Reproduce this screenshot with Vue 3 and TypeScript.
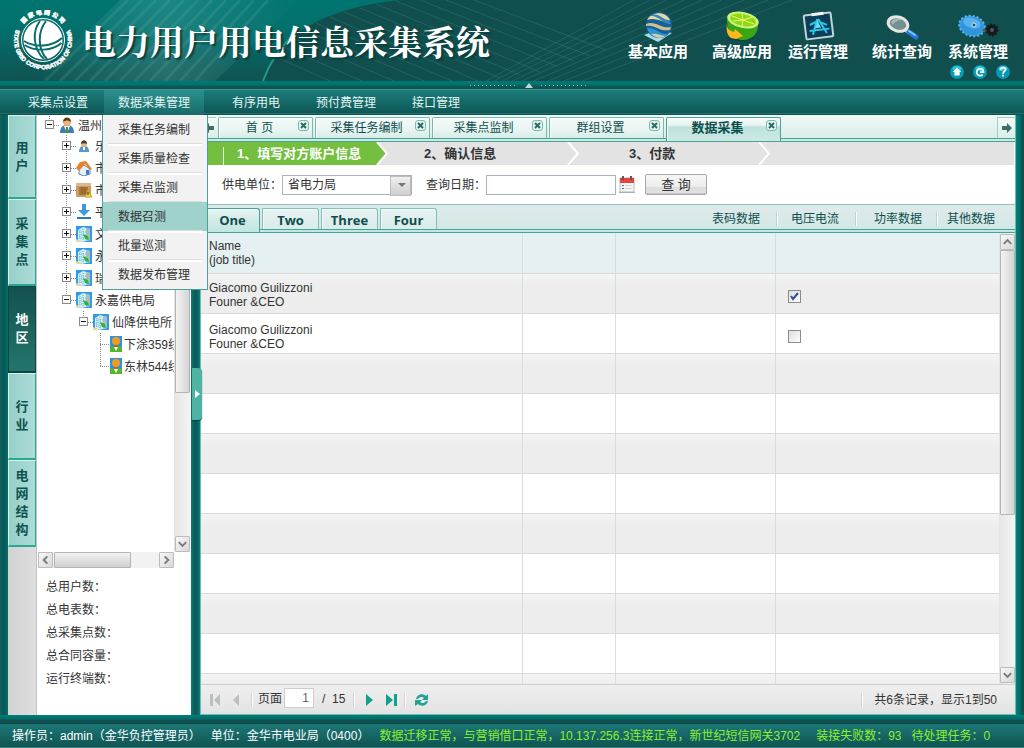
<script setup lang="ts">
import { ref } from 'vue'

type IconName = 'globe' | 'lime' | 'board' | 'lens' | 'gear'
type TreeIcon = 'user' | 'worker' | 'home' | 'box' | 'down' | 'tower' | 'line'

interface TreeRow {
  depth: number
  icon: TreeIcon
  label: string
  node: 'open' | 'closed' | 'leaf'
}

const apps: { name: string; icon: IconName }[] = [
  { name: '基本应用', icon: 'globe' },
  { name: '高级应用', icon: 'lime' },
  { name: '运行管理', icon: 'board' },
  { name: '统计查询', icon: 'lens' },
  { name: '系统管理', icon: 'gear' },
]

const navItems = ['采集点设置', '数据采集管理', '有序用电', '预付费管理', '接口管理']
const activeNav = ref(1)
const menuItems = ['采集任务编制', '采集质量检查', '采集点监测', '数据召测', '批量巡测', '数据发布管理']
const activeMenu = ref(3)

const sideTabs = ['用户', '采集点', '地区', '行业', '电网结构']
const activeSide = ref(2)

const tree: TreeRow[] = [
  { depth: 0, icon: 'user', label: '温州', node: 'open' },
  { depth: 1, icon: 'worker', label: '乐', node: 'closed' },
  { depth: 1, icon: 'home', label: '市', node: 'closed' },
  { depth: 1, icon: 'box', label: '市', node: 'closed' },
  { depth: 1, icon: 'down', label: '平', node: 'closed' },
  { depth: 1, icon: 'tower', label: '文', node: 'closed' },
  { depth: 1, icon: 'tower', label: '永', node: 'closed' },
  { depth: 1, icon: 'tower', label: '瑞', node: 'closed' },
  { depth: 1, icon: 'tower', label: '永嘉供电局', node: 'open' },
  { depth: 2, icon: 'tower', label: '仙降供电所', node: 'open' },
  { depth: 3, icon: 'line', label: '下涂359线', node: 'leaf' },
  { depth: 3, icon: 'line', label: '东林544线', node: 'leaf' },
]

const totals = ['总用户数：', '总电表数：', '总采集点数：', '总合同容量：', '运行终端数：']

const pageTabs = ['首 页', '采集任务编制', '采集点监制', '群组设置', '数据采集']
const activePage = ref(4)
const steps = ['1、填写对方账户信息', '2、确认信息', '3、付款']
const gridTabs = ['One', 'Two', 'Three', 'Four']
const activeGrid = ref(0)
const dataLinks = ['表码数据', '电压电流', '功率数据', '其他数据']

const people = ref([
  { name: 'Giacomo Guilizzoni', job: 'Founer &CEO', checked: true },
  { name: 'Giacomo Guilizzoni', job: 'Founer &CEO', checked: false },
])
const emptyRows = 9
const date = ref('')
const unit = ref('省电力局')
const page = ref('1')
</script>

<template>
  <div class="page">
    <header class="banner">
      <svg class="banner-art" viewBox="0 0 1024 81" preserveAspectRatio="xMinYMin slice" aria-hidden="true">
        <defs>
          <linearGradient id="bg" x1="0" y1="0" x2="0" y2="1">
            <stop offset="0" stop-color="#00756f" />
            <stop offset="0.35" stop-color="#03706c" />
            <stop offset="1" stop-color="#0f5352" />
          </linearGradient>
          <linearGradient id="ray" x1="0" y1="0" x2="1" y2="0">
            <stop offset="0" stop-color="#8cc" stop-opacity="0" />
            <stop offset="0.5" stop-color="#8cc" stop-opacity="0.2" />
            <stop offset="1" stop-color="#8cc" stop-opacity="0" />
          </linearGradient>
        </defs>
        <rect width="1024" height="81" fill="url(#bg)" />
        <path d="M35 81L120 0H300L215 81Z" fill="url(#ray)" />
        <path d="M45 81L128 0M60 81L142 0M75 81L156 0M90 81L170 0M105 81L184 0M120 81L198 0M135 81L212 0M150 81L226 0M165 81L240 0M180 81L254 0M195 81L268 0" stroke="#8cc6c1" stroke-opacity="0.14" stroke-width="3" />
        <path d="M263 81C276 44 308 10 400 0H1024V81Z" fill="#104f4e" />
        <path d="M263 81C269 64 278 50 292 36" fill="none" stroke="#23968c" stroke-width="2" />
        <path d="M276 57L330 81M284 47L362 81M293 38L394 81M304 30L424 81M316 23L452 81M330 17L478 81M344 12L500 78M360 8L520 75M376 4L540 72M396 1L556 66M420 0L574 61M446 0L590 56M474 0L606 50" fill="none" stroke="#5a9c98" stroke-opacity="0.26" />
        <path d="M486 81L634 0M494 81L650 0M502 81L666 0M512 81L684 0M522 81L702 0M534 81L722 0M548 81L744 0M564 81L768 0M582 81L792 0" stroke="#5a9c98" stroke-opacity="0.26" fill="none" />
      </svg>
      <svg class="logo" viewBox="0 0 120 120" aria-hidden="true">
        <path id="ring-low" d="M5 42A58 58 0 1 0 115 42" fill="none" />
        <path id="ring-top" d="M15 40A48 48 0 0 1 105 40" fill="none" />
        <text class="ring ring-en"><textPath href="#ring-low" startOffset="50%" text-anchor="middle">STATE GRID CORPORATION OF CHINA</textPath></text>
        <text class="ring ring-cn"><textPath href="#ring-top" startOffset="50%" text-anchor="middle">国 家 电 网 公 司</textPath></text>
        <circle cx="60" cy="60" r="43" fill="none" stroke="#fff" stroke-width="2" />
        <circle cx="60" cy="60" r="39" fill="#fff" />
        <path d="M54 22C38 42 40 78 62 98M66 22C50 42 48 78 68 98M22 62C44 76 78 74 98 56M23 70C46 84 78 82 97 66" fill="none" stroke="#0b6d6a" stroke-width="4" />
      </svg>
      <h1>电力用户用电信息采集系统</h1>
      <div class="banner-right">
        <nav class="apps" aria-label="应用">
          <a v-for="a in apps" :key="a.name" href="#" :class="a.icon">
            <svg width="42" height="32" viewBox="0 0 42 32" aria-hidden="true">
              <g v-if="a.icon === 'globe'">
                <path d="M7 25l13-5 15 3-14 9z" fill="#a9dcf0" />
                <circle cx="22" cy="15" r="13" fill="#17609b" />
                <path d="M10 10c5-9 19-9 23 0-6 5-13-4-23 0z" fill="#e4d9a4" />
                <path d="M13 6c8-5 12 4 19 4l2 4C26 15 22 5 13 6z" fill="#3586b4" />
                <path d="M9 14c9-4 15 5 25 3l-1 3c-11 2-15-6-24-4z" fill="#cfc08a" />
                <path d="M10 18c8-1 13 7 21 6-5 6-17 6-21-6z" fill="#2b94d0" />
                <path d="M14 24c6-1 9 2 14 2-4 3-10 2-14-2z" fill="#d8cd9e" />
              </g>
              <g v-else-if="a.icon === 'lime'">
                <ellipse cx="19" cy="28" rx="14" ry="3" fill="#073f3e" opacity="0.5" />
                <path d="M6 6C5 20 12 30 22 30c10 0 16-8 15-17z" fill="#39a616" />
                <ellipse cx="22" cy="10" rx="16" ry="8" transform="rotate(12 22 10)" fill="#cdf27e" />
                <ellipse cx="22" cy="10" rx="13" ry="6" transform="rotate(12 22 10)" fill="#8fd814" />
                <path d="M22 10L11 6M22 10l-1-6M22 10l10-3M22 10l11 4M22 10l-1 6M22 10l-10 1" stroke="#e6f77c" />
                <path d="M6 14c0 5 3 7 7 8l1-3 8 7-7 3-5-1c-4-3-5-8-4-14z" fill="#ffb71c" />
              </g>
              <g v-else-if="a.icon === 'board'" transform="rotate(-7 21 16)">
                <rect x="8" y="4" width="27" height="24" rx="1" fill="#0c3e55" stroke="#bfd4dc" stroke-width="2" />
                <path d="M16 4h12" stroke="#f4f7f8" stroke-width="3" />
                <path d="M21 9L15 24M22 9l7 15M12 20h20M13 14l8-3 9 5" stroke="#2fc4ee" stroke-width="2" fill="none" />
                <path d="M21 11l3 7h-6z" fill="#63e1f7" />
              </g>
              <g v-else-if="a.icon === 'lens'">
                <path d="M23 19l5 4" stroke="#c9c9c9" stroke-width="3" />
                <path d="M28 22l7 5" stroke="#1f77dc" stroke-width="5" stroke-linecap="round" />
                <path d="M28 21l6 4" stroke="#86c5ff" stroke-width="2" stroke-linecap="round" />
                <ellipse cx="17" cy="14" rx="10" ry="7" transform="rotate(16 17 14)" fill="#6f9191" stroke="#e9e4df" stroke-width="3" />
                <path d="M10 12c3-4 8-5 12-2-4 0-8 1-10 5z" fill="#b9cccc" opacity="0.7" />
              </g>
              <g v-else>
                <ellipse cx="15" cy="16" rx="13" ry="10" transform="rotate(16 15 16)" fill="#2f95dc" />
                <ellipse cx="15" cy="16" rx="13" ry="10" transform="rotate(16 15 16)" fill="none" stroke="#5fb6ee" stroke-width="2" stroke-dasharray="2 2" />
                <ellipse cx="15" cy="13" rx="9" ry="5" transform="rotate(16 15 13)" fill="#6cbcf0" opacity="0.7" />
                <circle cx="17" cy="15" r="2" fill="#0f4f70" stroke="#c8e9fb" />
                <path d="M26 20l6 1" stroke="#6b4a2a" stroke-width="2" />
                <circle cx="35" cy="20" r="5" fill="#151a1c" stroke="#151a1c" stroke-width="3" stroke-dasharray="2 1" />
                <circle cx="35" cy="20" r="2" fill="#4c5b5c" />
              </g>
            </svg>
            <span>{{ a.name }}</span>
          </a>
        </nav>
        <div class="tools">
          <button type="button" aria-label="首页">
            <svg viewBox="0 0 16 16"><circle cx="8" cy="8" r="8" fill="#0897b4" /><ellipse cx="8" cy="4" rx="5" ry="3" fill="#25c9dc" /><path d="M8 3l5 5h-2v4H5V8H3z" fill="#fff" /></svg>
          </button>
          <button type="button" class="reload" aria-label="刷新">
            <svg viewBox="0 0 16 16"><circle cx="8" cy="8" r="8" fill="#0897b4" /><ellipse cx="8" cy="4" rx="5" ry="3" fill="#25c9dc" /><path d="M11 11a4 4 0 1 1 1-4M13 8H8" stroke="#fff" stroke-width="2" fill="none" /></svg>
          </button>
          <button type="button" aria-label="帮助">
            <svg viewBox="0 0 16 16"><circle cx="8" cy="8" r="8" fill="#0897b4" /><ellipse cx="8" cy="4" rx="5" ry="3" fill="#25c9dc" /><path d="M5 6c0-4 6-4 6-1 0 2-3 2-3 5M8 11v2" stroke="#fff" stroke-width="2" fill="none" /></svg>
          </button>
        </div>
      </div>
    </header>

    <div class="fold">
      <i></i>
      <button type="button" aria-label="收起"><svg width="8" height="5" viewBox="0 0 8 5"><path d="M4 0l4 5H0z" fill="#c6d6d5" /></svg></button>
      <i></i>
    </div>

    <nav class="bar" aria-label="主菜单">
      <div v-for="(n, i) in navItems" :key="n" class="bar-item" :class="{ on: i === activeNav }">
        <a href="#" @click.prevent="activeNav = i">{{ n }}</a>
        <ul v-if="i === activeNav" class="menu">
          <li v-for="(m, k) in menuItems" :key="m" :class="{ on: k === activeMenu }">
            <a href="#" @click.prevent="activeMenu = k">{{ m }}</a>
          </li>
        </ul>
      </div>
    </nav>

    <main class="work">
      <div class="side-tabs">
        <button v-for="(s, i) in sideTabs" :key="s" type="button" :class="{ on: i === activeSide }" @click="activeSide = i">
          <span>{{ s }}</span>
        </button>
      </div>

      <aside class="side">
        <div class="tree-box">
          <ul class="tree">
            <li v-for="(r, i) in tree" :key="i" :class="['d' + r.depth, r.icon]">
              <svg class="joint" width="14" height="22" viewBox="0 0 14 22" aria-hidden="true">
                <path v-if="r.node === 'leaf'" :d="i === tree.length - 1 ? 'M4.500 0V11.500M4 11.500H14' : 'M4.500 0V22M4 11.500H14'" class="dots" />
                <template v-else>
                  <path :d="r.node === 'open' ? 'M4.500 0V7M9 11.500H14' : 'M4.500 0V22M9 11.500H14'" class="dots" />
                  <rect x="0.500" y="6.500" width="8" height="8" fill="#fff" stroke="#8a8a8a" />
                  <path :d="r.node === 'open' ? 'M2 10.500h5' : 'M2 10.500h5M4.500 8v5'" stroke="#111" />
                </template>
              </svg>
              <svg class="pic" :width="r.icon === 'line' ? 12 : 16" height="16" :viewBox="r.icon === 'line' ? '0 0 12 16' : '0 0 16 16'" aria-hidden="true">
                <g v-if="r.icon === 'user'">
                  <path d="M1 16c0-6 3-8 7-8s7 2 7 8z" fill="#3a7fb5" /><path d="M5 9l3 7 3-7z" fill="#fff" /><path d="M7 10h2v6H7z" fill="#4d8a3a" />
                  <circle cx="8" cy="5" r="4" fill="#f3b36d" /><path d="M4 5c0-6 8-6 8 0-3-2-5-2-8 0z" fill="#54401f" />
                </g>
                <g v-else-if="r.icon === 'worker'">
                  <path d="M3 14c0-5 2-6 5-6s5 1 5 6z" fill="#5596d3" /><circle cx="8" cy="6" r="3" fill="#eeb27c" /><path d="M5 6c0-5 6-5 6 0-2-1-4-1-6 0z" fill="#4a3a2a" /><path d="M7 9h2v3H7z" fill="#fff" />
                </g>
                <g v-else-if="r.icon === 'home'">
                  <path d="M3 8l5-3 6 4v5l-6 2-5-2z" fill="#e6eef8" stroke="#5b8dc4" /><path d="M0 8l4-6 6-1 6 8-2 1-5-6-6 7z" fill="#e8822a" /><path d="M10 10h3v4l-3 1z" fill="#4079be" />
                </g>
                <g v-else-if="r.icon === 'box'">
                  <rect x="0" y="1" width="15" height="14" rx="1" fill="#c99c63" /><rect x="0" y="1" width="15" height="3" fill="#dcb987" /><rect x="3" y="5" width="9" height="8" fill="#a9763e" /><path d="M6 5v8M9 5v8" stroke="#845a2c" /><path d="M12 8l4 7H9z" fill="#fbd832" stroke="#c49c1a" /><path d="M12 10v3" stroke="#222" />
                </g>
                <g v-else-if="r.icon === 'down'">
                  <path d="M6 0h4v6h4l-6 6-6-6h4z" fill="#3f97dc" /><path d="M1 14h14" stroke="#2a77b8" stroke-width="2" />
                </g>
                <g v-else-if="r.icon === 'tower'">
                  <rect width="16" height="16" fill="#2f9bea" /><path d="M2 4l5-3 7 2v11l-8 2-4-2z" fill="#d3ecf2" /><path d="M10 2l4 1v11l-4 1z" fill="#a9bcc4" /><path d="M4 4v10M7 3v12M3 6h8M3 9h8M3 12h8" stroke="#63b8c8" stroke-dasharray="1 1" /><path d="M7 8l5 2 1 4-4-1z" fill="#2fb43a" /><path d="M0 13l5 2v1H0z" fill="#e8dc9c" />
                </g>
                <g v-else>
                  <rect width="12" height="16" fill="#2d93df" /><path d="M0 10l4 1 4-1 4 1v5H0z" fill="#55b52c" /><path d="M4 11l2 4 2-4z" fill="#fff" /><circle cx="6" cy="5" r="4" fill="#f59a1d" /><path d="M4 9h4v2H4z" fill="#b56b16" />
                </g>
              </svg>
              <a href="#">{{ r.label }}</a>
            </li>
          </ul>
          <div class="vbar tree-v">
            <span class="thumb"></span>
            <button type="button" class="sb" aria-label="向下"><svg viewBox="0 0 14 14"><path d="M3 5l4 4 4-4" /></svg></button>
          </div>
        </div>
        <div class="hbar">
          <button type="button" class="sb" aria-label="向左"><svg viewBox="0 0 14 14"><path d="M9 3L5 7l4 4" /></svg></button>
          <span class="thumb"></span>
          <span class="fill"></span>
          <button type="button" class="sb" aria-label="向右"><svg viewBox="0 0 14 14"><path d="M5 3l4 4-4 4" /></svg></button>
        </div>
        <ul class="totals">
          <li v-for="t in totals" :key="t">{{ t }}</li>
        </ul>
      </aside>

      <div class="split">
        <button type="button" aria-label="展开"><svg width="5" height="8" viewBox="0 0 5 8"><path d="M0 0l5 4-5 4z" fill="#fff" /></svg></button>
      </div>

      <section class="content">
        <div class="page-tabs">
          <button type="button" class="roll" aria-label="左移"><svg width="10" height="10" viewBox="0 0 10 10"><path d="M0 5l5-5v3h5v4H5v3z" fill="#3f6b62" /></svg></button>
          <div v-for="(t, i) in pageTabs" :key="t" class="ptab" :class="{ on: i === activePage, home: i === 0 }">
            <button type="button" class="ptab-name" @click="activePage = i">{{ t }}</button>
            <button type="button" class="close" :aria-label="'关闭' + t"><svg width="7" height="7" viewBox="0 0 7 7"><path d="M1 1l5 5M6 1L1 6" stroke="#2d6b66" stroke-width="2" /></svg></button>
          </div>
          <span class="grow"></span>
          <button type="button" class="roll right" aria-label="右移"><svg width="10" height="10" viewBox="0 0 10 10"><path d="M10 5L5 0v3H0v4h5v3z" fill="#3f6b62" /></svg></button>
        </div>

        <ol class="steps">
          <li v-for="(s, i) in steps" :key="s" :class="{ on: i === 0 }">
            <span>{{ s }}</span>
            <svg width="13" height="23" viewBox="0 0 13 23" aria-hidden="true"><path v-if="i === 0" d="M0 0h1l10 11.500L1 23H0z" fill="#74bf3f" /><path d="M1 0l10 11.500L1 23" fill="none" stroke="#fff" stroke-width="2" /></svg>
          </li>
        </ol>

        <form class="query" @submit.prevent>
          <label for="unit">供电单位：</label>
          <span class="select"><select id="unit" v-model="unit"><option>省电力局</option></select></span>
          <label for="date" class="date-label">查询日期：</label>
          <input id="date" v-model="date" type="text" />
          <button type="button" class="cal" aria-label="选择日期">
            <svg width="16" height="17" viewBox="0 0 16 17"><rect x="1" y="2" width="14" height="14" fill="#f4f6f6" stroke="#b9b9b9" /><path d="M1 2h14v5H1z" fill="#e4433f" /><path d="M4 0v4M12 0v4" stroke="#6d5555" stroke-width="2" /><path d="M3 9.500h2M3 12.500h2" stroke="#5472b8" /><path d="M6 9.500h7M6 12.500h7" stroke="#cfd6d2" /><path d="M0 16.500h16" stroke="#a9b2b0" /></svg>
          </button>
          <button type="submit" class="go">查 询</button>
        </form>

        <div class="grid-tabs">
          <button v-for="(t, i) in gridTabs" :key="t" type="button" :class="{ on: i === activeGrid }" @click="activeGrid = i">{{ t }}</button>
          <nav class="data-links" aria-label="数据">
            <a v-for="d in dataLinks" :key="d" href="#">{{ d }}</a>
          </nav>
        </div>

        <div class="grid-box">
          <div class="grid-clip">
            <table>
              <colgroup><col class="c1" /><col class="c2" /><col class="c3" /><col /></colgroup>
              <thead>
                <tr><th>Name<br />(job title)</th><th></th><th></th><th></th></tr>
              </thead>
              <tbody>
                <tr v-for="(p, i) in people" :key="i">
                  <td>{{ p.name }}<br />{{ p.job }}</td><td></td><td></td>
                  <td class="tick">
                    <label>
                      <input v-model="p.checked" type="checkbox" :aria-label="p.name" />
                      <svg v-if="p.checked" width="9" height="9" viewBox="0 0 9 9" aria-hidden="true"><path d="M1 4l2 3 5-6" fill="none" stroke="#3b4aa0" stroke-width="2" /></svg>
                    </label>
                  </td>
                </tr>
                <tr v-for="n in emptyRows" :key="'e' + n"><td></td><td></td><td></td><td></td></tr>
              </tbody>
            </table>
          </div>
          <div class="vbar">
            <button type="button" class="sb" aria-label="向上"><svg viewBox="0 0 14 14"><path d="M3 9l4-4 4 4" /></svg></button>
            <span class="thumb"></span>
            <button type="button" class="sb" aria-label="向下"><svg viewBox="0 0 14 14"><path d="M3 5l4 4 4-4" /></svg></button>
          </div>
        </div>

        <div class="pager">
          <button type="button" aria-label="第一页"><svg width="11" height="12" viewBox="0 0 11 12"><path d="M0 0h3v12H0zM10 0v12L4 6z" fill="#b9bfbe" /></svg></button>
          <button type="button" class="prev" aria-label="上一页"><svg width="7" height="12" viewBox="0 0 7 12"><path d="M6 0v12L0 6z" fill="#b9bfbe" /></svg></button>
          <i class="bar1"></i>
          <label for="page">页面</label>
          <input id="page" v-model="page" type="text" />
          <span class="of">/&nbsp; 15</span>
          <i class="bar2"></i>
          <button type="button" aria-label="下一页"><svg width="7" height="12" viewBox="0 0 7 12"><path d="M0 0v12l7-6z" fill="#12a08d" /></svg></button>
          <button type="button" class="last" aria-label="最后一页"><svg width="11" height="12" viewBox="0 0 11 12"><path d="M8 0h3v12H8zM0 0v12l7-6z" fill="#12a08d" /></svg></button>
          <i class="bar3"></i>
          <button type="button" aria-label="刷新"><svg width="16" height="14" viewBox="0 0 16 14"><path d="M2 6c1-5 7-6 10-3l2-2v6H8l2-2C8 3 5 4 4 6zM14 8c-1 5-7 6-10 3l-3 2V7h7L6 9c2 2 5 1 6-1z" fill="#1fa392" /></svg></button>
          <span class="grow"></span>
          <i class="bar4"></i>
          <span class="count">共6条记录，显示1到50</span>
        </div>
      </section>
      <div class="edge"></div>
    </main>

    <div class="base"></div>
    <footer class="status">
      <span>操作员：admin（金华负控管理员）</span>
      <span>单位：金华市电业局（0400）</span>
      <span class="lit">数据迁移正常，与营销借口正常，10.137.256.3连接正常，新世纪短信网关3702</span>
      <span class="lit fail">装接失败数：93</span>
      <span class="lit">待处理任务：0</span>
    </footer>
  </div>
</template>

<style>
body {
  margin: 0;
}
</style>

<style scoped>
* {
  box-sizing: border-box;
}
.page {
  display: flex;
  flex-direction: column;
  height: 100vh;
  min-height: 600px;
  overflow: hidden;
  background: #0f5352;
  color: #333;
  font: 12px/16px "Liberation Sans", "Noto Sans CJK SC", sans-serif;
}
button {
  margin: 0;
  padding: 0;
  border: 0;
  background: none;
  color: inherit;
  font: inherit;
}
svg {
  display: block;
}
ul,
ol {
  margin: 0;
  padding: 0;
  list-style: none;
}
a {
  color: inherit;
  text-decoration: none;
}
.grow {
  flex: 1;
}

/* Banner */
.banner {
  position: relative;
  display: flex;
  flex: none;
  height: 81px;
}
.banner-art {
  position: absolute;
  inset: 0;
  width: 100%;
  height: 100%;
}
.logo {
  position: relative;
  width: 60px;
  height: 60px;
  margin: 10px 0 0 13px;
}
.ring {
  fill: #fff;
  stroke: #fff;
  font-family: "Liberation Sans", "Noto Sans CJK SC", sans-serif;
  font-size: 12px;
  font-weight: bold;
}
h1 {
  position: relative;
  margin: 19px 0 0 9px;
  color: #fff;
  font: bold 34px/50px "Liberation Serif", "Noto Serif CJK SC", "Noto Sans CJK SC", serif;
  text-shadow: 2px 2px 2px #073c3b;
  white-space: nowrap;
}
.banner-right {
  position: relative;
  margin: 10px 16px 0 auto;
}
.apps {
  display: flex;
  gap: 16px;
}
.apps a {
  display: flex;
  flex-direction: column;
  align-items: center;
  color: #fff;
  font-size: 15px;
  font-weight: bold;
  line-height: 20px;
  white-space: nowrap;
}
.apps .lime,
.apps .lens {
  margin-left: 8px;
}
.tools {
  display: flex;
  justify-content: flex-end;
  gap: 9px;
  margin: 3px -2px 0 0;
}
.tools svg {
  width: 14px;
  height: 14px;
}

/* Fold strip */
.fold {
  display: flex;
  flex: none;
  align-items: center;
  justify-content: center;
  gap: 8px;
  height: 8px;
  padding-left: 34px;
  background: linear-gradient(#017873, #01736f 45%, #0f5554 70%, #0f4f4e);
}
.fold i {
  width: 47px;
  height: 1px;
  background: repeating-linear-gradient(90deg, #8dbdba 0 1px, transparent 1px 4px);
}

/* Menu bar */
.bar {
  display: flex;
  flex: none;
  height: 26px;
  padding-left: 14px;
  border-top: 1px solid #3f9592;
  background: linear-gradient(#1b7d7a, #0e5857 90%, #3c8481 92%, #0b4f4e 97%);
  color: #e4f6f4;
}
.bar-item {
  position: relative;
  margin-right: 8px;
  padding: 0 14px;
  line-height: 26px;
}
.bar-item:first-child {
  margin-right: 2px;
}
.bar-item.on {
  margin-right: 14px;
  background: linear-gradient(#2c908d, #176b69);
}
.menu {
  position: absolute;
  z-index: 5;
  top: 25px;
  left: -2px;
  width: 106px;
  border: 1px solid #4d9f95;
  border-top: 0;
  background: #f2f2f2;
  color: #333;
}
.menu li {
  position: relative;
  height: 29px;
  padding-left: 15px;
  line-height: 30px;
}
.menu li:not(:last-child)::after {
  content: "";
  display: block;
  height: 2px;
  margin: -1px 5px 0 -10px;
  border-top: 1px solid #dedede;
  background: #fff;
}
.menu li.on {
  background: #9ed2cb;
}
.menu li a {
  display: block;
  height: 29px;
  white-space: nowrap;
}

/* Work area */
.work {
  display: flex;
  flex: 1;
  min-height: 0;
  padding-left: 8px;
  background: linear-gradient(90deg, #0d6361, #0a5655 4px, #00716d 8px);
}
.side-tabs {
  width: 29px;
  overflow: hidden;
  background: linear-gradient(90deg, #d2d2d2, #dedede);
  border-right: 1px solid #c3c3c3;
}
.side-tabs button {
  display: flex;
  align-items: center;
  justify-content: center;
  width: 29px;
  height: 87px;
  border: 1px solid #d9f1ed;
  border-right: 2px solid #2aa896;
  border-bottom: 2px solid #2aa896;
  background: linear-gradient(90deg, #97cfc9, #acdcd7);
  color: #0e5350;
  font-size: 13px;
  font-weight: bold;
  line-height: 18px;
}
.side-tabs button:first-child {
  height: 84px;
}
.side-tabs span {
  width: 13px;
  word-break: break-all;
}
.side-tabs .on {
  border-color: #0c4645;
  background: linear-gradient(#14514e, #23766c);
  color: #fff;
}
.side {
  display: flex;
  flex-direction: column;
  width: 154px;
  background: #fff;
}
.tree-box {
  display: flex;
  height: 437px;
}
.tree {
  flex: 1;
  min-width: 0;
  overflow: hidden;
  padding-left: 8px;
}
.tree li {
  display: flex;
  align-items: center;
  height: 22px;
  white-space: nowrap;
}
.tree .d0 {
  height: 20px;
}
.tree .d1 {
  padding-left: 17px;
}
.tree .d2 {
  padding-left: 34px;
}
.tree .d3 {
  padding-left: 51px;
}
.tree svg {
  flex: none;
}
.tree a {
  padding: 2px 0 0 3px;
}
.tree .line a {
  padding-left: 2px;
}
.dots {
  fill: none;
  stroke: #8c8c8c;
  stroke-dasharray: 1 1;
}
.vbar {
  display: flex;
  flex: none;
  flex-direction: column;
  width: 16px;
  border-left: 1px solid #e4e4e4;
  background: linear-gradient(90deg, #e6e6e6, #f4f4f4);
}
.vbar .thumb {
  width: 15px;
  border: 1px solid #b4b4b4;
  border-radius: 1px;
  background: linear-gradient(90deg, #f3f3f3, #d4d4d4);
}
.tree-v {
  justify-content: space-between;
  margin-right: 1px;
}
.tree-v .thumb {
  height: 278px;
}
.sb {
  flex: none;
  width: 15px;
  height: 16px;
  border: 1px solid #bcbcbc;
  border-radius: 1px;
  background: linear-gradient(135deg, #f7f7f7, #d8d8d8);
}
.sb svg {
  width: 13px;
  height: 14px;
  fill: none;
  stroke: #777;
  stroke-width: 2;
}
.hbar {
  display: flex;
  width: 136px;
  height: 16px;
  margin-left: 1px;
  background: #f2f2f2;
}
.hbar .thumb {
  width: 77px;
  margin-left: 1px;
  border: 1px solid #b4b4b4;
  border-radius: 1px;
  background: linear-gradient(#f3f3f3, #cfcfcf);
}
.hbar .fill {
  flex: 1;
}
.totals {
  padding: 8px 0 0 9px;
}
.totals li {
  line-height: 23px;
}
.split {
  display: flex;
  align-items: center;
  width: 9px;
  padding-bottom: 43px;
  background: linear-gradient(90deg, #00807a, #0f5a58 40%, #0f5a58 60%, #00807a);
}
.split button {
  position: relative;
  z-index: 2;
  display: flex;
  flex: none;
  align-items: center;
  justify-content: center;
  width: 10px;
  height: 52px;
  margin-left: 1px;
  border-radius: 0 4px 4px 0;
  background: #4fb3a3;
  box-shadow: 0 1px 1px #0a4443;
}
.edge {
  width: 8px;
  background: linear-gradient(90deg, #00827c, #006d69 50%, #0f4f4e 80%);
}

/* Content */
.content {
  display: flex;
  flex: 1;
  flex-direction: column;
  min-width: 0;
  border: 1px solid #6fb9b1;
  border-top: 0;
  background: #fff;
}
.page-tabs {
  display: flex;
  flex: none;
  gap: 2px;
  height: 27px;
  padding-top: 2px;
  border-bottom: 1px solid #46a396;
  background: linear-gradient(#eef8f5, #d9efea 23px, #46a396 23px, #46a396 24px, #cde9e4 24px);
}
.roll {
  display: flex;
  align-items: center;
  justify-content: center;
  width: 15px;
  height: 21px;
  border-top: 1px solid #9fcdc5;
  background: linear-gradient(#f4fbf9, #d8efe9);
}
.roll.right {
  width: 18px;
  border-left: 1px solid #9fcdc5;
}
.ptab {
  display: flex;
  align-items: flex-start;
  width: 115px;
  height: 21px;
  padding-right: 3px;
  border: 1px solid #78b9b0;
  border-bottom: 0;
  border-radius: 2px 2px 0 0;
  box-shadow: inset 1px 1px 0 #fff;
  background: linear-gradient(#f3fbf9, #e9f5f2 60%, #d4ece7);
  color: #0e4f4d;
}
.ptab.home {
  width: 95px;
}
.ptab.on {
  height: 24px;
  border-color: #46a396;
  background: linear-gradient(#f3fbf9, #e9f5f2 30%, #bde2dc 40%, #cde9e4);
  font-size: 13px;
  font-weight: bold;
}
.ptab-name {
  flex: 1;
  height: 20px;
  padding-left: 2px;
  line-height: 20px;
}
.close {
  display: flex;
  align-items: center;
  justify-content: center;
  width: 11px;
  height: 11px;
  margin: 2px 0 0;
  border: 1px solid #7dbab1;
  border-radius: 3px;
  background: #e3f4f0;
}
.steps {
  display: flex;
  flex: none;
  height: 23px;
  margin-right: 1px;
  background: #e3e3e3;
  color: #333;
  font-size: 13px;
  font-weight: bold;
  line-height: 23px;
}
.steps li {
  display: flex;
  justify-content: space-between;
  width: 191px;
  padding-left: 35px;
}
.steps li:nth-child(3) {
  padding-left: 49px;
}
.steps li.on {
  width: 188px;
  padding-left: 22px;
  background: linear-gradient(90deg, #74bf3f 176px, #e3e3e3 176px);
  color: #fff;
}
.steps li.on span {
  margin: 5px 0 0;
  padding-left: 13px;
  border-left: 1px solid #e8f6df;
  line-height: 14px;
  white-space: nowrap;
}
.query {
  display: flex;
  flex: none;
  align-items: center;
  height: 39px;
  padding-left: 21px;
}
.select {
  position: relative;
  width: 130px;
  height: 20px;
}
.select select {
  width: 100%;
  height: 100%;
  padding: 0 22px 0 5px;
  border: 1px solid #adafc2;
  border-radius: 0;
  appearance: none;
  background: #fff;
  color: #333;
  font: inherit;
}
.select::before {
  content: "";
  position: absolute;
  top: 1px;
  right: 1px;
  width: 19px;
  height: 18px;
  border: 1px solid #bdbdbd;
  background: linear-gradient(#efefef, #cfcfcf);
  pointer-events: none;
}
.select::after {
  content: "";
  position: absolute;
  top: 8px;
  right: 6px;
  border: 4px solid transparent;
  border-top-color: #777;
  border-bottom: 0;
  pointer-events: none;
}
.date-label {
  margin-left: 14px;
}
.query input {
  width: 130px;
  height: 20px;
  padding: 0 4px;
  border: 1px solid #adafc2;
  font: inherit;
}
.cal {
  margin-left: 3px;
}
.go {
  width: 62px;
  height: 21px;
  margin-left: 10px;
  border: 1px solid #a9a9a9;
  border-radius: 2px;
  background: linear-gradient(#f7f7f7, #eee 60%, #dcdcdc 65%, #e3e3e3);
  box-shadow: inset 0 -1px 0 #c5c5c5;
  line-height: 18px;
  font-size: 13px;
}
.grid-tabs {
  display: flex;
  flex: none;
  align-items: flex-start;
  gap: 2px;
  height: 29px;
  padding-top: 3px;
  border-top: 1px solid #8cc4c4;
  border-bottom: 1px solid #46a396;
  background: linear-gradient(#dfeaea, #d2e8e6 24px, #46a396 24px, #46a396 25px, #c2e6e0 25px);
}
.grid-tabs button {
  width: 57px;
  height: 21px;
  border: 1px solid #83bfb7;
  border-bottom: 0;
  border-radius: 0 3px 0 0;
  box-shadow: inset 1px 1px 0 #f5fbfa;
  background: linear-gradient(#e7f2f1, #d9ebea);
  color: #0e4f4d;
  font: bold 13px/22px "Open Sans", "Noto Sans", sans-serif;
}
.grid-tabs button.on {
  width: 59px;
  height: 24px;
  padding: 0 0 2px 5px;
  border-color: #46a396;
  border-left: 0;
  background: linear-gradient(#e7f5f2, #d5ece8 40%, #c2e6e0);
}
.data-links {
  display: flex;
  margin-left: auto;
  color: #0e4f4d;
}
.data-links a {
  height: 14px;
  margin-top: 4px;
  padding: 0 16px 0 14px;
  line-height: 14px;
  border-right: 1px solid #b5d6d8;
  box-shadow: 1px 0 0 #fff;
}
.data-links a:nth-child(3) {
  padding: 0 14px 0 18px;
}
.data-links a:last-child {
  padding: 0 20px 0 10px;
  border: 0;
  box-shadow: none;
}
.grid-box {
  display: flex;
  flex: 1;
  min-height: 0;
}
.grid-clip {
  flex: 1;
  min-width: 0;
  overflow: hidden;
}
table {
  width: 100%;
  border-spacing: 0;
  table-layout: fixed;
  line-height: 14px;
}
.c1 {
  width: 322px;
}
.c2 {
  width: 93px;
}
.c3 {
  width: 160px;
}
th,
td {
  height: 40px;
  padding: 2px 0 0 8px;
  border-right: 1px solid #d9dddd;
  border-bottom: 1px solid #d9d9d9;
  font-weight: normal;
  text-align: left;
}
th {
  height: 41px;
  padding-top: 0;
  background: #e4f0f1;
}
th:last-child,
td:last-child {
  border-right: 0;
}
tbody tr:nth-child(odd) td {
  background: linear-gradient(#f4f4f4, #ededed 12px);
}
tbody tr:nth-child(2) td:first-child {
  padding-top: 6px;
}
.tick {
  padding: 5px 0 0 12px;
}
.tick label {
  position: relative;
  display: block;
  width: 13px;
}
.tick input {
  display: block;
  width: 13px;
  height: 13px;
  margin: 0;
  border: 1px solid #8b8b8b;
  appearance: none;
  background: linear-gradient(135deg, #dcdcdc, #fff);
}
.tick svg {
  position: absolute;
  top: 2px;
  left: 2px;
  pointer-events: none;
}
.grid-box .vbar {
  justify-content: flex-start;
  padding: 1px 0;
}
.grid-box .vbar .thumb {
  height: 59%;
}
.grid-box .vbar .sb:last-child {
  margin-top: auto;
}
.pager {
  display: flex;
  flex: none;
  align-items: center;
  height: 30px;
  padding-left: 9px;
  border-top: 1px solid #cfcfcf;
  background: linear-gradient(#efefef, #e3e3e3);
}
.pager i {
  width: 2px;
  height: 14px;
  border-left: 1px solid #d2d2d2;
  background: #fff;
}
.pager .prev {
  margin-left: 12px;
}
.pager .bar1 {
  margin: 0 5px 0 11px;
}
.pager input {
  width: 30px;
  height: 20px;
  margin: 0 8px 4px 2px;
  padding: 0 4px;
  border: 1px solid #cdcdcd;
  color: #666;
  font: inherit;
  text-align: right;
}
.pager label,
.pager .of {
  padding-bottom: 2px;
}
.pager .bar2 {
  margin: 0 11px 0 8px;
}
.pager .last {
  margin-left: 13px;
}
.pager .bar3 {
  margin: 0 8px 0 7px;
}
.pager .count {
  padding: 0 18px 0 11px;
}

/* Status line */
.base {
  flex: none;
  height: 8px;
  background: linear-gradient(#00807a, #046a67 50%, #0f5150 65%);
}
.status {
  display: flex;
  flex: none;
  align-items: center;
  gap: 10px;
  height: 25px;
  padding-left: 12px;
  border-top: 1px solid #0c4443;
  border-bottom: 1px solid #3c8481;
  background: linear-gradient(#1c7876, #0f5453);
  color: #fff;
  white-space: nowrap;
}
.lit {
  color: #8df02c;
}
.fail {
  margin-left: 6px;
}
</style>
